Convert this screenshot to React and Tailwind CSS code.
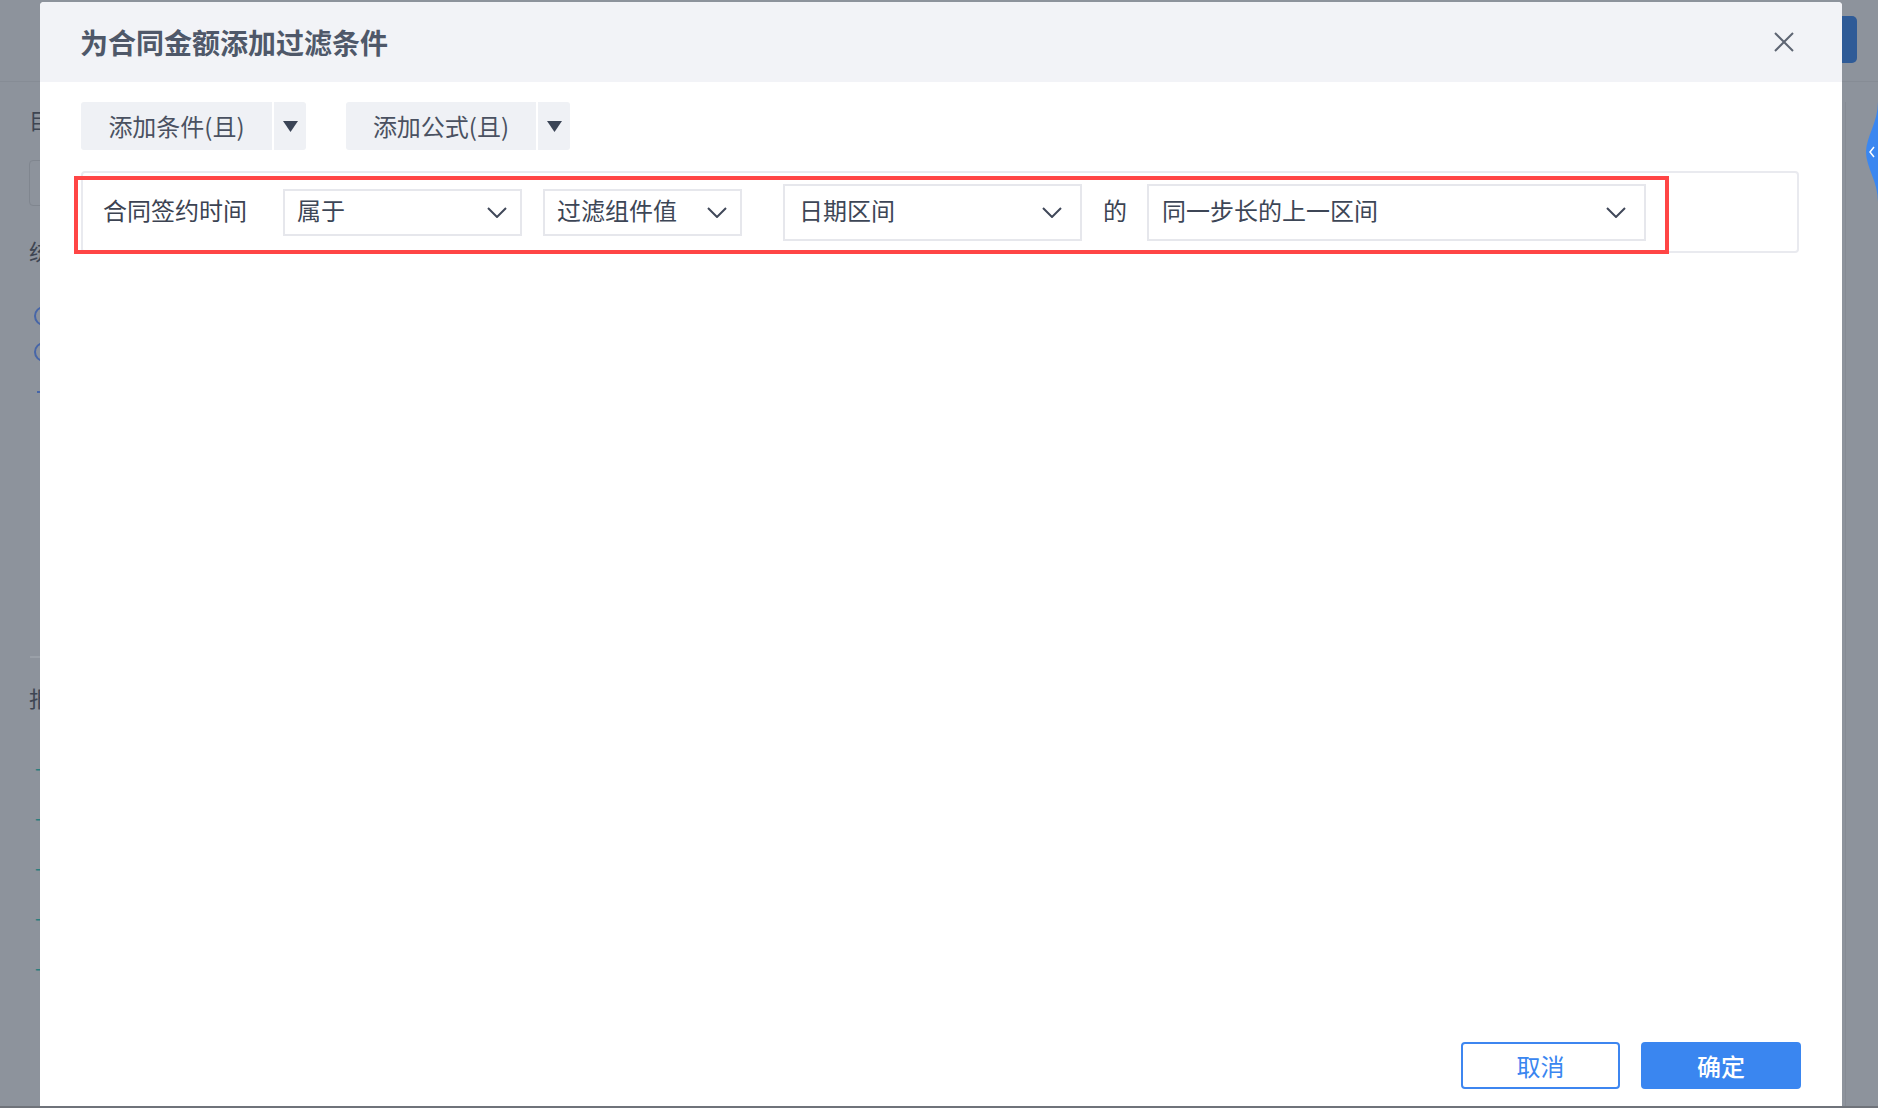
import React from "react";

const Chevron = () => (
  <svg width="20" height="11" viewBox="0 0 20 11" fill="none">
    <path d="M1 1L10 10L19 1" stroke="#404859" strokeWidth="2" />
  </svg>
);

const Caret = () => (
  <svg width="15" height="11" viewBox="0 0 15 11">
    <polygon points="0,0 15,0 7.5,11" fill="#3b4556" />
  </svg>
);

const SplitButton = ({ label, width }) => (
  <div className="flex h-[48px] gap-[2px]">
    <div
      className={`flex items-center justify-center bg-[#eff1f5] text-[24px] text-[#4a5161] rounded-l-[3px] ${width}`}
    >
      {label}
    </div>
    <div className="flex w-[32px] items-center justify-center bg-[#eff1f5] rounded-r-[3px]">
      <Caret />
    </div>
  </div>
);

const Select = ({ value, className }) => (
  <div
    className={`flex items-center justify-between border-2 border-[#e6e7ec] bg-white text-[24px] text-[#3d4656] ${className}`}
  >
    <span className="pb-[4px]">{value}</span>
    <Chevron />
  </div>
);

const BackgroundPage = () => (
  <div className="flex h-full flex-col">
    <div className="flex h-[82px] shrink-0 items-start justify-end border-b border-[#868c95] pr-[21px] pt-[16px]">
      <div className="h-[47px] w-[60px] rounded-[5px] bg-[#2f5b97]" />
    </div>
    <div className="flex flex-1">
      <div className="flex w-[260px] flex-col pl-[29px] text-[22px] text-[#3e4552]">
        <div className="mt-[24px] leading-[26px]">目标字段</div>
        <div className="mt-[28px] h-[46px] w-[200px] rounded-[4px] border border-[#80868f]" />
        <div className="mt-[32px] leading-[24px]">统计方式</div>
        <div className="mt-[44px] ml-[5px] h-[20px] w-[20px] rounded-full border-2 border-[#4766a8]" />
        <div className="mt-[16px] ml-[5px] h-[20px] w-[20px] rounded-full border-2 border-[#4766a8]" />
        <div className="mt-[29px] ml-[8px] h-[2px] w-[10px] bg-[#4766a8]" />
        <div className="mt-[263px] ml-[1px] h-[2px] w-[40px] bg-[#9aa0a8]" />
        <div className="mt-[26px] leading-[26px]">报表</div>
        <div className="mt-[46px] flex flex-col gap-[26px] pl-[6px] text-[#2a7d7e] leading-[24px]">
          <span>+添加</span>
          <span>+添加</span>
          <span>+添加</span>
          <span>+添加</span>
          <span>+添加</span>
        </div>
      </div>
      <div className="flex-1" />
      <div className="mt-[20px] flex w-[33px] justify-end border-l border-[#868b94]">
        <svg width="14" height="100" viewBox="0 0 14 100">
          <path
            d="M14 0 C14 20 2 35 2 50 C2 65 14 80 14 100 Z"
            fill="#3b87f0"
          />
          <path d="M10 45 L6 50 L10 55" stroke="#ffffff" strokeWidth="1.5" fill="none" />
        </svg>
      </div>
    </div>
  </div>
);

export default function App() {
  return (
    <div className="relative h-[1108px] w-[1878px] overflow-hidden border-b-2 border-[#6f737a] bg-[#8d939c] font-['Noto_Sans_CJK_SC','Noto_Sans',sans-serif]">
      <BackgroundPage />

      <div className="absolute bottom-0 left-[40px] top-[2px] flex w-[1802px] flex-col overflow-hidden rounded-t-[4px] bg-white">
        <div className="flex h-[80px] shrink-0 items-center justify-between bg-[#f2f3f7] pl-[40px] pr-[48px]">
          <h1 className="text-[28px] font-bold text-[#4f5869]">为合同金额添加过滤条件</h1>
          <svg width="20" height="20" viewBox="0 0 20 20">
            <path d="M1 1L19 19M19 1L1 19" stroke="#5e6573" strokeWidth="2" />
          </svg>
        </div>

        <div className="relative flex flex-1 flex-col pl-[41px] pr-[41px]">
          <div className="mt-[20px] flex gap-[40px]">
            <SplitButton label="添加条件(且)" width="w-[191px]" />
            <SplitButton label="添加公式(且)" width="w-[190px]" />
          </div>

          <div className="mr-[2px] mt-[21px] flex h-[82px] items-center rounded-[4px] border-2 border-[#e9eaef] pl-[20px]">
            <span className="pb-[4px] text-[24px] text-[#3c4352]">合同签约时间</span>
            <Select value="属于" className="ml-[36px] h-[47px] w-[239px] pl-[12px] pr-[13px]" />
            <Select value="过滤组件值" className="ml-[21px] h-[47px] w-[199px] pl-[12px] pr-[13px]" />
            <Select value="日期区间" className="ml-[41px] h-[57px] w-[299px] pl-[14px] pr-[18px]" />
            <span className="ml-[21px] pb-[4px] text-[24px] text-[#3c4352]">的</span>
            <Select value="同一步长的上一区间" className="ml-[20px] h-[57px] w-[499px] pl-[13px] pr-[18px]" />
          </div>

          <div className="absolute left-[34px] top-[94px] h-[78px] w-[1595px] border-4 border-[#ff4545]" />

          <div className="mt-auto mb-[17px] flex justify-end gap-[21px]">
            <button className="flex h-[47px] w-[159px] items-center justify-center rounded-[4px] border-2 border-[#3d86f0] bg-white text-[24px] text-[#3a86f0]">
              取消
            </button>
            <button className="flex h-[47px] w-[160px] items-center justify-center rounded-[4px] bg-[#3a86f0] text-[24px] font-medium text-white">
              确定
            </button>
          </div>
        </div>
      </div>
    </div>
  );
}
